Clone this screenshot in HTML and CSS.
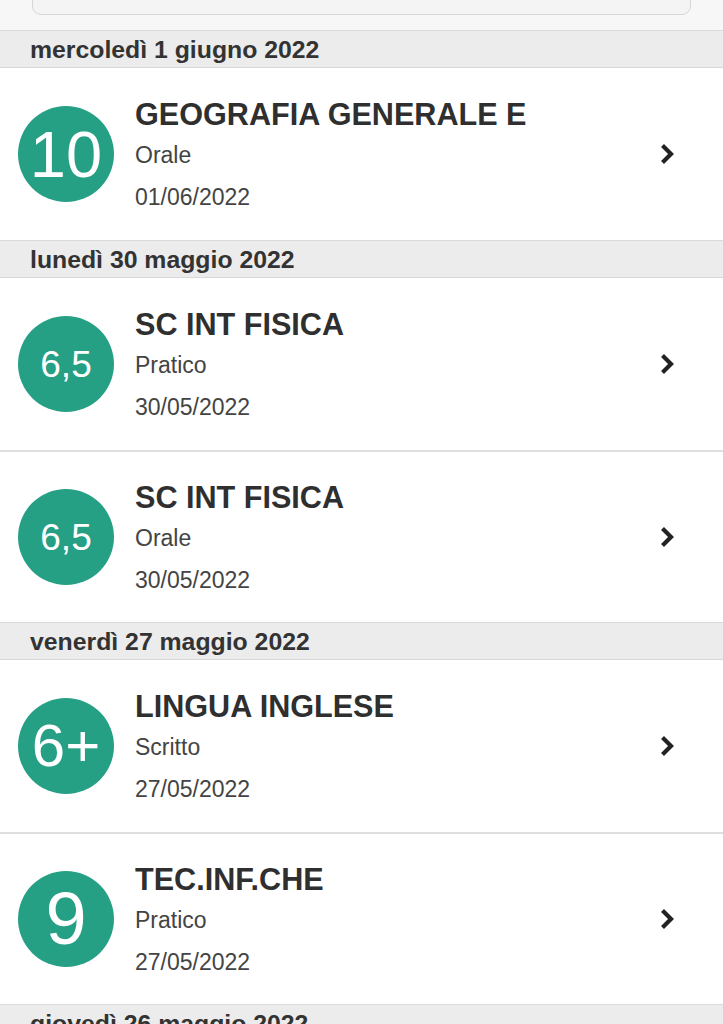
FILE: index.html
```html
<!DOCTYPE html>
<html lang="it">
<head>
    <meta charset="UTF-8">
    <meta name="viewport" content="width=device-width, initial-scale=1.0">
    <title>Voti</title>
    <link rel="stylesheet" href="styles.css">
</head>
<body>
    <div class="toolbar">
        <div class="search"></div>
    </div>

    <div class="day">mercoledì 1 giugno 2022</div>
    <div class="mark">
        <div class="grade size-lg">10</div>
        <div class="info">
            <div class="subject">GEOGRAFIA GENERALE E</div>
            <div class="type">Orale</div>
            <div class="date">01/06/2022</div>
        </div>
        <svg class="chevron" width="16" height="22" viewBox="0 0 16 22"><polyline points="3.5,2.5 12,11 3.5,19.5" /></svg>
    </div>

    <div class="day">lunedì 30 maggio 2022</div>
    <div class="mark">
        <div class="grade size-sm">6,5</div>
        <div class="info">
            <div class="subject">SC INT FISICA</div>
            <div class="type">Pratico</div>
            <div class="date">30/05/2022</div>
        </div>
        <svg class="chevron" width="16" height="22" viewBox="0 0 16 22"><polyline points="3.5,2.5 12,11 3.5,19.5" /></svg>
    </div>
    <div class="mark">
        <div class="grade size-sm">6,5</div>
        <div class="info">
            <div class="subject">SC INT FISICA</div>
            <div class="type">Orale</div>
            <div class="date">30/05/2022</div>
        </div>
        <svg class="chevron" width="16" height="22" viewBox="0 0 16 22"><polyline points="3.5,2.5 12,11 3.5,19.5" /></svg>
    </div>

    <div class="day">venerdì 27 maggio 2022</div>
    <div class="mark">
        <div class="grade size-md">6+</div>
        <div class="info">
            <div class="subject">LINGUA INGLESE</div>
            <div class="type">Scritto</div>
            <div class="date">27/05/2022</div>
        </div>
        <svg class="chevron" width="16" height="22" viewBox="0 0 16 22"><polyline points="3.5,2.5 12,11 3.5,19.5" /></svg>
    </div>
    <div class="mark">
        <div class="grade size-xl">9</div>
        <div class="info">
            <div class="subject">TEC.INF.CHE</div>
            <div class="type">Pratico</div>
            <div class="date">27/05/2022</div>
        </div>
        <svg class="chevron" width="16" height="22" viewBox="0 0 16 22"><polyline points="3.5,2.5 12,11 3.5,19.5" /></svg>
    </div>

    <div class="day">giovedì 26 maggio 2022</div>
</body>
</html>
```

FILE: styles.css
```css
body {
    margin: 0;
    font-family: "Liberation Sans", Arial, sans-serif;
    background-color: #fff;
    color: #333;
}

.toolbar {
    height: 30px;
    box-sizing: border-box;
    padding: 0 32px 15px;
    display: flex;
    align-items: flex-end;
    overflow: hidden;
    background-color: #f7f7f7;
}

.search {
    flex: 1;
    height: 50px;
    border: 1px solid #d6d6d6;
    border-radius: 9px;
    background-color: #f4f4f4;
}

.day {
    height: 38px;
    box-sizing: border-box;
    padding-left: 30px;
    font-size: 24.8px;
    font-weight: bold;
    line-height: 37px;
    color: #333;
    background-color: #ececec;
    border-top: 1px solid #dadada;
    border-bottom: 1px solid #d8d8d8;
}

.mark {
    height: 172px;
    box-sizing: border-box;
    display: flex;
    align-items: center;
    padding: 0 48px 0 18px;
}

.mark + .mark {
    border-top: 2px solid #dedede;
}

.grade {
    width: 96px;
    height: 96px;
    flex-shrink: 0;
    border-radius: 50%;
    background-color: #25a085;
    color: #fff;
    display: flex;
    align-items: center;
    justify-content: center;
    line-height: 1;
}

.size-sm {
    font-size: 37px;
}

.size-md {
    font-size: 60px;
}

.size-lg {
    font-size: 65px;
}

.size-xl {
    font-size: 74px;
}

.info {
    flex: 1;
    margin-left: 21px;
}

.subject {
    font-size: 30.6px;
    font-weight: bold;
    line-height: 36px;
    color: #2f2f2f;
}

.type {
    margin-top: 8px;
    font-size: 23px;
    line-height: 30px;
    color: #444;
}

.date {
    margin-top: 12px;
    font-size: 23px;
    line-height: 30px;
    color: #444;
}

.chevron polyline {
    fill: none;
    stroke: #222;
    stroke-width: 4.2;
    stroke-linecap: butt;
    stroke-linejoin: miter;
}
```
